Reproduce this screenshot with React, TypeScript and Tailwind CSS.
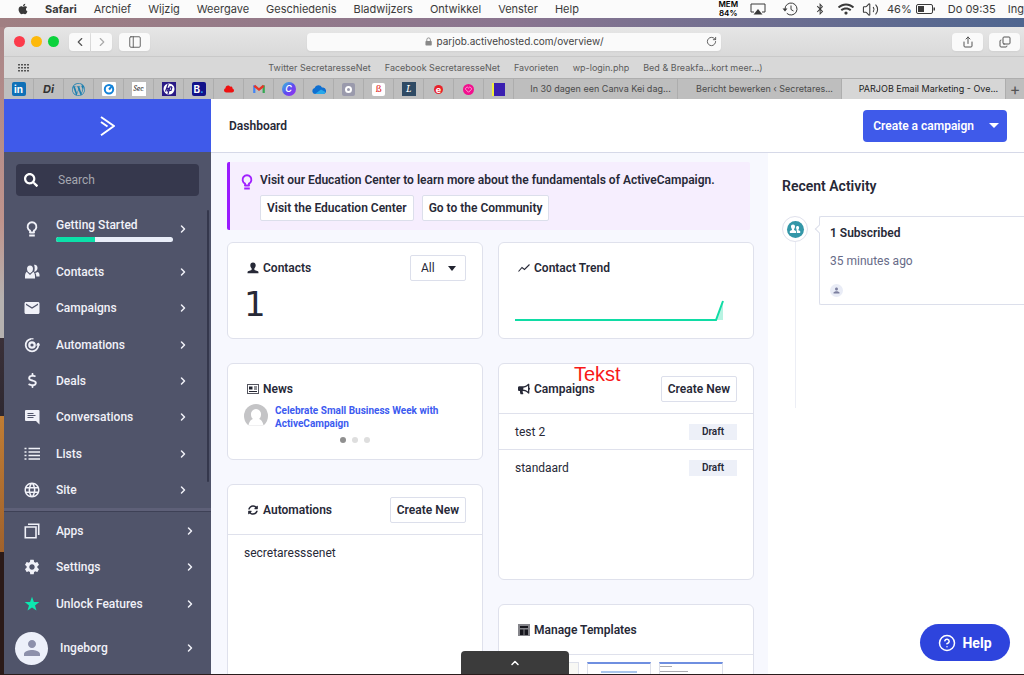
import type { ReactNode } from "react";
import { FaApple, FaBluetoothB, FaBullhorn, FaCloud, FaSearch, FaSyncAlt, FaWifi } from "react-icons/fa";
import { FaDollarSign } from "react-icons/fa6";
import { MdEmail, MdLanguage, MdPerson, MdSettings } from "react-icons/md";
import { SiWordpress } from "react-icons/si";
import { ChevronLeft, ChevronRight, ChevronUp, CircleHelp, Copy, PanelLeft, RotateCw, Share, Volume2 } from "lucide-react";

const MENUS = ["Archief", "Wijzig", "Weergave", "Geschiedenis", "Bladwijzers", "Ontwikkel", "Venster", "Help"];

const BOOKMARKS = [
  "Twitter SecretaresseNet",
  "Facebook SecretaresseNet",
  "Favorieten",
  "wp-login.php",
  "Bed & Breakfa...kort meer...)",
];

const TABS = [
  { title: "In 30 dagen een Canva Kei dag...", active: false },
  { title: "Bericht bewerken ‹ Secretares...", active: false },
  { title: "PARJOB Email Marketing - Ove...", active: true },
];

const FAVICONS: { name: string; icon: ReactNode }[] = [
  { name: "LinkedIn", icon: <span className="flex size-[14px] items-center justify-center rounded-xs bg-[#0f70b7] text-[10px] font-bold text-white">in</span> },
  { name: "Di", icon: <span className="text-[11px] font-bold italic text-[#333]">Di</span> },
  { name: "WordPress", icon: <SiWordpress className="size-[13px] text-[#1b7fb0]" /> },
  {
    name: "Target",
    icon: (
      <svg viewBox="0 0 14 14" className="size-[14px]">
        <rect width="14" height="14" rx="1" fill="#fff" />
        <circle cx="7" cy="7.3" r="4.2" fill="none" stroke="#1583d8" strokeWidth="2" />
        <path d="M7 7.5 10.500 3.500" stroke="#1583d8" strokeWidth="2" />
      </svg>
    ),
  },
  { name: "Secretaresse", icon: <span className="flex size-[14px] items-center justify-center overflow-hidden bg-white font-serif text-[8px] italic text-[#333]">Sec</span> },
  {
    name: "HP",
    icon: (
      <svg viewBox="0 0 14 14" className="size-[14px]">
        <rect width="14" height="14" fill="#2a1a86" />
        <circle cx="7" cy="7" r="5.500" fill="#fff" />
        <path d="M6.200 2 3.500 9.500M4.800 6.300h1.500L5.300 9.500M10 4.800H8L6 12M10 4.800 9 8.500H7.500" fill="none" stroke="#2a1a86" strokeWidth="1.200" />
      </svg>
    ),
  },
  { name: "Booking", icon: <span className="flex size-[14px] items-center justify-center rounded-xs bg-[#12128a] text-[10px] font-bold text-white">B<span className="text-[#2aa5f0]">.</span></span> },
  { name: "Cloud", icon: <FaCloud className="size-[10px] text-[#ee1111]" /> },
  {
    name: "Gmail",
    icon: (
      <svg viewBox="0 0 14 11" className="w-3">
        <path d="M1.5 10.500V1.500" stroke="#4285f4" strokeWidth="2.600" />
        <path d="M12.500 10.500V1.500" stroke="#34a853" strokeWidth="2.600" />
        <path d="M1.500 2 7 6.500 12.500 2" fill="none" stroke="#e53527" strokeWidth="2.800" />
      </svg>
    ),
  },
  { name: "Canva", icon: <span className="flex size-[14px] items-center justify-center rounded-full bg-linear-to-br from-[#1ec0d6] via-[#5b4cf0] to-[#9a20f0] text-[9px] font-semibold italic text-white">C</span> },
  {
    name: "OneDrive",
    icon: (
      <svg viewBox="0 0 14 9" className="w-[14px]">
        <path d="M3 9a3 3 0 0 1-.4-5.900A4 4 0 0 1 10 2.600 3.200 3.200 0 0 1 11.500 9Z" fill="#0f6fd0" />
        <path d="M3 9 9 4.500 13.500 7a2.600 2.600 0 0 1-2 2Z" fill="#28a8ea" />
      </svg>
    ),
  },
  { name: "Circle", icon: <span className="flex size-[13px] items-center justify-center rounded-xs bg-[#9a9aac]"><span className="size-[7px] rounded-full border-2 border-white" /></span> },
  { name: "B", icon: <span className="flex size-[13px] items-center justify-center rounded-xs bg-white font-serif text-[11px] text-[#e02020]">ß</span> },
  { name: "L", icon: <span className="flex size-[14px] items-center justify-center bg-[#2f4a64] font-serif text-[11px] italic text-white">L</span> },
  { name: "E", icon: <span className="flex size-[9px] items-center justify-center rounded-full bg-[#e8222a] text-[9px] font-bold leading-none text-white">e</span> },
  {
    name: "Heart",
    icon: (
      <svg viewBox="0 0 12 12" className="size-[11px]">
        <circle cx="6" cy="6" r="6" fill="#f20f8e" />
        <path d="M6 9 3 6a1.600 1.600 0 0 1 3-1.600A1.600 1.600 0 0 1 9 6Z" fill="none" stroke="#ffb0da" />
      </svg>
    ),
  },
  { name: "Blocks", icon: <span className="size-[13px] border-l-2 border-[#f2ee3c] bg-[#3a1fb0]" /> },
];

const BulbIcon = () => (
  <svg viewBox="0 0 12 16" className="h-4 w-3 shrink-0" fill="none" stroke="currentColor" strokeWidth="1.900">
    <path d="M4 11.500V9.600A4.400 4.400 0 1 1 8 9.600v1.900Z" strokeLinejoin="round" />
    <path d="M3.200 14.500h5.600" />
  </svg>
);

const ContactsIcon = () => (
  <svg viewBox="0 0 16 16" className="size-4" fill="currentColor">
    <path d="M6 1.500c2 0 3 1.500 3 3.300 0 1.200-.3 2-.8 2.800L6 9.500 3.800 7.600C3.300 6.800 3 6 3 4.800 3 3 4 1.500 6 1.500Z" />
    <path d="M2.700 7.800 6 11l3.300-3.200c1 .8 1.700 2.500 1.700 4.500V14.500H1v-2.200c0-2 .7-3.700 1.700-4.500Z" />
    <path d="M10 .8c2.300-.4 3.600 1 3.500 3.200 0 1.200-.5 2.200-1.300 3L10.200 8C10.800 5.500 11 3 10 .8ZM11.300 9l2.500-1c1.200.6 1.700 1.600 1.700 3v1.500h-3.200c0-1.500-.3-2.500-1-3.500Z" />
  </svg>
);

const AutomationsIcon = () => (
  <svg viewBox="0 0 16 16" className="size-4" fill="none" stroke="currentColor">
    <path d="M7 1.800A6.300 6.300 0 1 0 14.300 8.500V6" strokeWidth="1.800" />
    <path d="M11.800 8.500 14.300 5.500l2 3Z" fill="currentColor" stroke="none" />
    <circle cx="8" cy="8" r="2.700" strokeWidth="2.200" />
    <path d="M7 1.800h2.500" strokeWidth="1.200" />
  </svg>
);

const ConversationsIcon = () => (
  <svg viewBox="0 0 16 16" className="size-4">
    <path d="M2 1h12.500a1 1 0 0 1 1 1v13.500L12 12H2a1 1 0 0 1-1-1V2a1 1 0 0 1 1-1Z" fill="currentColor" />
    <path d="M3.500 4.500h6M3.500 6.500h8M3.500 8.500h6" stroke="#50546a" strokeWidth="1.200" />
  </svg>
);

const ListsIcon = () => (
  <svg viewBox="0 0 16 16" className="size-4" stroke="currentColor" strokeWidth="1.500">
    <path d="M4.500 2.500H16M4.500 6H16M4.500 9.500H16M4.500 13H16M.5 2.500H2.500M.5 6H2.500M.5 9.500H2.500M.5 13H2.500" />
  </svg>
);

const AppsIcon = () => (
  <svg viewBox="0 0 16 16" className="size-4" fill="none" stroke="currentColor" strokeWidth="1.600">
    <path d="M1.300 4h10.700v10.700H1.300ZM4 1.300h10.700V12" />
  </svg>
);

const StarIcon = () => (
  <svg viewBox="0 0 16 16" className="size-4 text-[#0ce8b0]" fill="currentColor">
    <path d="m8 .8 1.900 5.100 5.400.2-4.300 3.300 1.500 5.200L8 11.600l-4.500 3 1.500-5.200L.7 6.100l5.400-.2Z" />
  </svg>
);

const PersonIcon = () => (
  <svg viewBox="0 0 12 12" className="size-3" fill="currentColor">
    <path d="M6 .5c1.800 0 2.700 1.200 2.700 2.800 0 1.400-.6 2.400-1.300 3V8L11 9.200c.4.200.5.800.5 2H.5c0-1.200.1-1.800.5-2L4.600 8V6.300c-.7-.6-1.300-1.600-1.300-3C3.300 1.700 4.200.5 6 .5Z" />
  </svg>
);

const NewsIcon = () => (
  <svg viewBox="0 0 12 10" className="w-3">
    <rect x=".5" y=".5" width="11" height="9" fill="#fff" stroke="#555660" />
    <path d="M2 2.500h3.500v3H2ZM7 2.500h3v1H7ZM7 4.500h3v1H7ZM2 7h8v1H2Z" fill="#222430" />
  </svg>
);

const TrendIcon = () => (
  <svg viewBox="0 0 12 12" className="size-3" fill="none" stroke="currentColor" strokeWidth="1.100">
    <path d="M.5 9.500 4 5.500l2.500 2L11.500 2.500" />
  </svg>
);

const TemplatesIcon = () => (
  <svg viewBox="0 0 12 12" className="size-3">
    <rect width="12" height="12" fill="#85858b" />
    <path d="M2 2h8v2H2ZM2 5.500h3.500V11H2ZM6.500 5.500H10V11H6.500Z" fill="#16161d" />
  </svg>
);

const NAV = [
  { label: "Contacts", icon: <ContactsIcon /> },
  { label: "Campaigns", icon: <MdEmail className="size-[18px] shrink-0" /> },
  { label: "Automations", icon: <AutomationsIcon /> },
  { label: "Deals", icon: <FaDollarSign className="size-[15px]" /> },
  { label: "Conversations", icon: <ConversationsIcon /> },
  { label: "Lists", icon: <ListsIcon /> },
  { label: "Site", icon: <MdLanguage className="size-[18px] shrink-0" /> },
];

const FOOTER_NAV = [
  { label: "Apps", icon: <AppsIcon /> },
  { label: "Settings", icon: <MdSettings className="size-[18px] shrink-0" /> },
  { label: "Unlock Features", icon: <StarIcon /> },
];

const CAMPAIGNS = ["test 2", "standaard"];

function MenuBar() {
  return (
    <header className="flex h-[18px] shrink-0 items-center overflow-hidden bg-[#fbfbfb] pl-[17px] text-[11px] text-[#3a3a3a]">
      <FaApple className="size-3 shrink-0" />
      <nav className="ml-4 flex gap-[17px]">
        <b className="font-bold">Safari</b>
        {MENUS.map((menu) => (
          <span key={menu}>{menu}</span>
        ))}
      </nav>
      <div className="ml-auto flex shrink-0 items-center whitespace-nowrap">
        <span className="mr-3 flex flex-col items-center text-[8px] leading-[9px] font-semibold text-black">
          <span>MEM</span>
          <span>84%</span>
        </span>
        <svg viewBox="0 0 16 12" className="mr-4 w-4">
          <path d="M4 9H1V1h14v8h-3" fill="none" stroke="currentColor" />
          <path d="m8 6 4.500 5.500h-9Z" fill="currentColor" />
        </svg>
        <svg viewBox="0 0 16 14" className="mr-4 w-4" fill="none" stroke="currentColor">
          <path d="M3 7a6 6 0 1 1 1.800 4.300M9 3.500V7.500l2.500 1.500" />
          <path d="M.5 6.500h5L3 9.500Z" fill="currentColor" stroke="none" />
        </svg>
        <FaBluetoothB className="mr-3 size-[12px]" />
        <FaWifi className="mr-2 size-4" />
        <Volume2 className="mr-2 size-[17px]" strokeWidth={1.5} />
        <span>46%</span>
        <svg viewBox="0 0 20 10" className="ml-1 mr-3 w-5">
          <rect x=".5" y=".5" width="16" height="9" rx="1.500" fill="none" stroke="currentColor" />
          <path d="M2 2h6v6H2ZM17.500 3.500h1.500v3h-1.500Z" fill="currentColor" />
        </svg>
        <span className="mr-3">Do 09:35</span>
        <span>Ing</span>
      </div>
    </header>
  );
}

function BrowserChrome() {
  const button = "flex h-[18px] items-center justify-center rounded-sm bg-[#fafafa] text-[#555] shadow-xs";
  return (
    <div className="shrink-0 text-[#555]">
      <div className="flex h-[30px] items-center border-b border-[#c9c9c9] bg-linear-to-b from-[#e6e6e6] to-[#d9d9d9] px-[10px]">
        <div className="flex flex-1 items-center">
          <span className="size-[11px] rounded-full bg-[#fc3b4b]" />
          <span className="ml-[6px] size-[11px] rounded-full bg-[#fdb90b]" />
          <span className="ml-[6px] size-[11px] rounded-full bg-[#0bd23c]" />
          <button aria-label="Vorige" className={`${button} ml-[10px] w-[21px] rounded-r-none`}>
            <ChevronLeft className="size-[14px]" />
          </button>
          <button aria-label="Volgende" className={`${button} ml-px w-[21px] rounded-l-none`}>
            <ChevronRight className="size-[14px] text-[#aaa]" />
          </button>
          <button aria-label="Zijbalk" className={`${button} ml-[7px] w-[31px]`}>
            <PanelLeft className="size-[14px]" strokeWidth={1.5} />
          </button>
        </div>
        <div className="flex h-[18px] w-[414px] items-center rounded-sm bg-[#fafafa] px-1 shadow-xs">
          <span className="flex flex-1 items-center justify-center gap-1 pl-3 text-[10px] text-[#444]">
            <svg viewBox="0 0 8 10" className="h-[9px]">
              <path d="M2 5V3a2 2 0 0 1 4 0v2" fill="none" stroke="#888" />
              <rect x=".5" y="4.500" width="7" height="5" rx=".8" fill="#888" />
            </svg>
            parjob.activehosted.com/overview/
          </span>
          <button aria-label="Herlaad">
            <RotateCw className="size-[11px]" />
          </button>
        </div>
        <div className="flex flex-1 justify-end gap-[6px]">
          <button aria-label="Deel" className={`${button} w-[31px]`}>
            <Share className="size-3" strokeWidth={2} />
          </button>
          <button aria-label="Toon tabs" className={`${button} -mr-[6px] w-[31px]`}>
            <Copy className="size-3 -scale-y-100" strokeWidth={2} />
          </button>
        </div>
      </div>
      <div className="flex h-[21px] items-center bg-[#d8d8d8] px-[13px]">
        <svg viewBox="0 0 13 9" className="w-[13px]" fill="#555">
          {[0, 3, 6].map((y) => [0, 3, 6, 9].map((x) => <rect key={`${x}-${y}`} x={x + 1} y={y + 1} width="2" height="1.500" />))}
        </svg>
        <nav className="flex flex-1 justify-center gap-[14px] pr-[10px] text-[9px] text-[#5c5c5c]">
          {BOOKMARKS.map((bookmark) => (
            <a key={bookmark} href="#">{bookmark}</a>
          ))}
        </nav>
      </div>
      <div className="flex h-[21px] border-t border-[#aeaeae] bg-[#bebebe]">
        {FAVICONS.map((tab) => (
          <button key={tab.name} aria-label={tab.name} className="flex w-[30px] shrink-0 items-center justify-center border-r border-[#adadad]">
            {tab.icon}
          </button>
        ))}
        {TABS.map((tab) => (
          <button
            key={tab.title}
            className={`min-w-0 flex-1 truncate border-r border-[#adadad] pl-[10px] text-[9px] ${tab.active ? "bg-[#d6d6d6] text-[#222]" : "text-[#4a4a4a]"}`}
          >
            {tab.title}
          </button>
        ))}
        <button aria-label="Nieuwe tab" className="w-[18px] text-base leading-none">+</button>
      </div>
    </div>
  );
}

function NavItem({ label, icon, inset }: { label: string; icon: ReactNode; inset: string }) {
  return (
    <a href="#" className={`flex flex-1 items-center pl-5 ${inset}`}>
      <span className="flex w-4 justify-center">{icon}</span>
      <span className="ml-4 flex-1">{label}</span>
      <ChevronRight className="size-3" strokeWidth={3} />
    </a>
  );
}

function Sidebar() {
  return (
    <aside className="flex w-[207px] shrink-0 flex-col bg-[#50546a] text-xs font-medium text-[#f0f1f8]">
      <div className="flex h-[53px] shrink-0 items-center justify-center bg-[#3f5aea]">
        <svg viewBox="0 0 16 20" className="h-5" fill="none" stroke="#fff" strokeWidth="2">
          <path d="M1 1 14 10 1 19.200" strokeLinejoin="round" />
          <path d="m1 6 6.500 4.500" />
        </svg>
      </div>
      <label className="mx-3 mt-3 flex h-8 shrink-0 items-center rounded bg-[#36384d] pl-2">
        <FaSearch className="size-[14px] shrink-0 text-white" />
        <input aria-label="Search" placeholder="Search" className="ml-5 w-full min-w-0 bg-transparent font-normal outline-none placeholder:text-[#a5a7b0]" />
      </label>
      <div className="relative mt-3 flex flex-1 flex-col">
        <a href="#" className="mb-1 flex h-[42px] shrink-0 items-center pl-5 pr-[22px]">
          <span className="flex w-4 justify-center">
            <BulbIcon />
          </span>
          <span className="ml-4 flex-1">
            Getting Started
            <span className="mt-1 flex h-[5px] overflow-hidden rounded-full bg-[#e9edf8]">
              <span className="w-1/3 bg-[#0ce0aa]" />
            </span>
          </span>
          <ChevronRight className="ml-1 size-3" strokeWidth={3} />
        </a>
        {NAV.map((item) => (
          <NavItem key={item.label} {...item} inset="pr-[22px]" />
        ))}
        <span className="absolute top-[2px] right-[2px] bottom-[26px] w-[2px] rounded-full bg-[#34374c]" />
      </div>
      <div className="h-1 shrink-0 border-b border-[#3e4156] bg-[#5e6078]" />
      <div className="flex h-[110px] shrink-0 flex-col pt-px">
        {FOOTER_NAV.map((item) => (
          <NavItem key={item.label} {...item} inset="pr-[15px]" />
        ))}
      </div>
      <a href="#" className="flex h-[52px] shrink-0 items-center pl-[11px] pr-[15px]">
        <span className="flex size-[33px] items-center justify-center rounded-full bg-[#edf0fa]">
          <MdPerson className="size-6 text-[#8d90ab]" />
        </span>
        <span className="ml-3 flex-1">Ingeborg</span>
        <ChevronRight className="size-3" strokeWidth={3} />
      </a>
    </aside>
  );
}

function OutlineButton({ children }: { children: ReactNode }) {
  return <button className="h-[26px] rounded-xs border border-[#dcdfeb] bg-white px-[6px] font-semibold whitespace-nowrap">{children}</button>;
}

function Card({ children, className = "" }: { children: ReactNode; className?: string }) {
  return <section className={`relative shrink-0 rounded-md border border-[#dfe1ec] bg-white ${className}`}>{children}</section>;
}

function CardTitle({ icon, children, action }: { icon: ReactNode; children: ReactNode; action?: ReactNode }) {
  return (
    <div className="flex h-[49px] items-center pl-[18px] pr-4">
      <span className="flex w-[13px] justify-center">{icon}</span>
      <h2 className="ml-1 flex-1 font-semibold">{children}</h2>
      {action}
    </div>
  );
}

function Notice() {
  return (
    <div className="mr-1 flex h-[68px] rounded-xs border-l-[3px] border-[#9a1cff] bg-[#f6eefe] pl-[11px] pt-[10px]">
      <span className="mt-[2px] text-[#a020ff]">
        <BulbIcon />
      </span>
      <div className="ml-[7px]">
        <p className="leading-4 font-semibold whitespace-nowrap">
          Visit our Education Center to learn more about the fundamentals of ActiveCampaign.
        </p>
        <div className="mt-[7px] flex gap-2">
          <OutlineButton>Visit the Education Center</OutlineButton>
          <OutlineButton>Go to the Community</OutlineButton>
        </div>
      </div>
    </div>
  );
}

function Widgets() {
  return (
    <div className="mt-3 grid min-h-0 grid-cols-2 gap-[15px]">
      <div className="flex flex-col gap-6">
        <Card className="h-[97px]">
          <CardTitle
            icon={<PersonIcon />}
            action={
              <span className="relative">
                <select aria-label="Contacts" className="h-[26px] w-14 appearance-none rounded-xs border border-[#dcdfeb] bg-white pl-[10px]">
                  <option>All</option>
                </select>
                <span className="pointer-events-none absolute top-[11px] right-[10px] border-x-4 border-t-[5px] border-x-transparent border-t-[#222430]" />
              </span>
            }
          >
            Contacts
          </CardTitle>
          <p className="-mt-2 pl-4 font-['DejaVu_Sans',sans-serif] text-[34px] leading-10">1</p>
        </Card>
        <Card className="h-[97px]">
          <CardTitle icon={<NewsIcon />}>News</CardTitle>
          <div className="-mt-[9px] flex gap-[7px] pl-4">
            <svg viewBox="0 0 24 24" className="size-6 shrink-0">
              <circle cx="12" cy="12" r="12" fill="#c4c4c6" />
              <path d="M12 5a5 5 0 0 1 5 5.500c0 2-.8 3.500-2 4.500 2 .8 4 2.500 4.500 6.500H4.500C5 17.500 7 15.800 9 15c-1.200-1-2-2.500-2-4.500A5 5 0 0 1 12 5Z" fill="#fff" />
              <path d="M4 21.500h16V24H4Z" fill="#fff" />
            </svg>
            <a href="#" className="w-[180px] text-[10px] leading-[13px] font-bold text-[#3d5bf0]">
              Celebrate Small Business Week with ActiveCampaign
            </a>
          </div>
          <div className="mt-[7px] flex justify-center gap-[6px]">
            <span className="size-[6px] rounded-full bg-[#8f8f8f]" />
            <span className="size-[6px] rounded-full bg-[#dedede]" />
            <span className="size-[6px] rounded-full bg-[#dedede]" />
          </div>
        </Card>
        <Card className="h-[217px]">
          <CardTitle icon={<FaSyncAlt className="size-[10px]" />} action={<OutlineButton>Create New</OutlineButton>}>
            Automations
          </CardTitle>
          <div className="flex h-9 items-center border-t border-[#dfe1ec] pl-4">secretaresssenet</div>
        </Card>
      </div>
      <div className="flex flex-col gap-6">
        <Card className="h-[97px]">
          <CardTitle icon={<TrendIcon />}>Contact Trend</CardTitle>
          <svg viewBox="0 0 210 24" className="mt-[6px] ml-4 w-[210px]" fill="none">
            <path d="m201 22 7-18v18Z" fill="#b8f3e2" />
            <path d="M0 22h201l7-19" stroke="#10dca5" strokeWidth="2" />
          </svg>
        </Card>
        <Card className="h-[217px]">
          <CardTitle icon={<FaBullhorn className="size-3" />} action={<OutlineButton>Create New</OutlineButton>}>
            Campaigns
          </CardTitle>
          <ul>
            {CAMPAIGNS.map((name) => (
              <li key={name} className="flex h-9 items-center justify-between border-t border-[#dfe1ec] px-4">
                {name}
                <span className="h-4 w-12 bg-[#edf0f8] text-center text-[10px] leading-4 font-semibold">Draft</span>
              </li>
            ))}
          </ul>
          <span className="absolute -top-[2px] left-[75px] font-['Liberation_Sans',sans-serif] text-xl leading-6 text-[#f81818]">Tekst</span>
        </Card>
        <Card className="h-[217px]">
          <CardTitle icon={<TemplatesIcon />}>Manage Templates</CardTitle>
          <div className="flex gap-2 border-t border-[#dfe1ec] pl-4 pt-[7px]">
            <div className="h-20 w-16 border border-[#dde0ea] bg-[#f8f8f4]" />
            <div className="h-20 w-16 border border-t-2 border-[#dde0ea] border-t-[#6f8fe0] pt-[7px]">
              <div className="mx-auto h-[2px] w-9 bg-[#a9c6ec]" />
            </div>
            <div className="h-20 w-16 border border-t-2 border-[#dde0ea] border-t-[#6f8fe0] pt-[2px]">
              <div className="h-px w-3 bg-[#aaaab0]" />
              <div className="mt-1 h-px w-7 bg-[#aaaab0]" />
            </div>
          </div>
        </Card>
      </div>
    </div>
  );
}

function RecentActivity() {
  return (
    <aside className="w-64 shrink-0 bg-white pl-[14px]">
      <h2 className="mt-[23px] text-sm leading-5 font-semibold">Recent Activity</h2>
      <div className="mt-5 flex">
        <div className="flex flex-col items-center">
          <span className="flex size-[26px] items-center justify-center rounded-full border border-[#dfe1ec]">
            <span className="flex size-[17px] items-center justify-center rounded-full bg-[#3497a8] text-white">
              <svg viewBox="0 0 12 12" className="size-3" fill="currentColor">
                <path d="M4 1.500c1.300 0 2 .9 2 2.200 0 1-.4 1.800-.9 2.300v1L7 8v2H.8V8l2.100-1V6C2.400 5.500 2 4.700 2 3.700 2 2.400 2.700 1.500 4 1.500Z" />
                <path d="M8.500 3c1 0 1.600.7 1.600 1.700 0 .8-.3 1.300-.7 1.700v.8l1.800.8v2H7.800V7.600l-.6-.5.6-.7c-.4-.4-.7-.9-.7-1.700C7.100 3.700 7.600 3 8.500 3Z" />
              </svg>
            </span>
          </span>
          <span className="h-[166px] w-px bg-[#eceef5]" />
        </div>
        <article className="relative ml-[11px] h-[89px] flex-1 rounded-l-xs border border-r-0 border-[#dcdfeb] pl-[10px] pt-2">
          <span className="absolute top-[9px] -left-[4px] size-[6px] rotate-45 border-b border-l border-[#dcdfeb] bg-white" />
          <h3 className="leading-4 font-semibold">1 Subscribed</h3>
          <p className="mt-3 leading-4 text-[#676b88]">35 minutes ago</p>
          <span className="mt-[15px] flex size-[13px] items-center justify-center rounded-full bg-[#e9ecf6]">
            <MdPerson className="size-[9px] text-[#7d80a0]" />
          </span>
        </article>
      </div>
    </aside>
  );
}

export default function App() {
  return (
    <div className="flex h-screen flex-col overflow-hidden bg-[#2a1c1c] font-[Inter,sans-serif]">
      <MenuBar />
      <div className="flex min-h-0 flex-1 flex-col bg-linear-to-r from-[#a07f82] via-[#8a7590] to-[#4f6690] pt-[9px]">
        <div className="flex min-h-0 flex-1">
          <div className="w-1 shrink-0 bg-[linear-gradient(#a98587_0%,#c0948c_30%,#b6b2b0_42%,#b6b2b0_48%,#3a3038_48%,#2e2830_60%,#c07d34_60%,#a0622c_81%,#2b1a18_81%)]" />
          <div className="flex min-w-0 flex-1 flex-col overflow-hidden rounded-tl-sm border-b border-[#2a1c1c]">
            <BrowserChrome />
            <div className="relative flex min-h-0 flex-1 overflow-hidden bg-white font-[Roboto,sans-serif] text-xs text-[#272937]">
              <Sidebar />
              <div className="flex min-w-0 flex-1 flex-col">
                <header className="flex h-[54px] shrink-0 items-center justify-between border-b border-[#d6d9e8] bg-white pl-[18px] pr-[17px]">
                  <h1 className="font-semibold">Dashboard</h1>
                  <button className="flex h-8 items-center rounded-sm bg-[#3f5aea] pl-[10px] pr-2 font-semibold text-white">
                    Create a campaign
                    <span className="ml-[15px] border-x-[5px] border-t-[5px] border-x-transparent border-t-white" />
                  </button>
                </header>
                <div className="flex min-h-0 flex-1">
                  <main className="min-w-0 flex-1 overflow-hidden bg-[#f7f8fe] pl-4 pr-[14px] pt-[9px]">
                    <Notice />
                    <Widgets />
                  </main>
                  <RecentActivity />
                </div>
              </div>
              <button aria-label="Open" className="absolute bottom-0 left-[457px] flex h-[23px] w-[108px] items-center justify-center rounded-t-sm bg-[#3b3b3b] text-white">
                <ChevronUp className="size-3" strokeWidth={3} />
              </button>
              <button className="absolute right-[14px] bottom-[13px] flex h-[37px] w-[90px] items-center justify-center gap-[6px] rounded-full bg-[#2e44dd] text-sm font-bold text-white">
                <CircleHelp className="size-[18px]" />
                Help
              </button>
            </div>
          </div>
        </div>
      </div>
    </div>
  );
}
